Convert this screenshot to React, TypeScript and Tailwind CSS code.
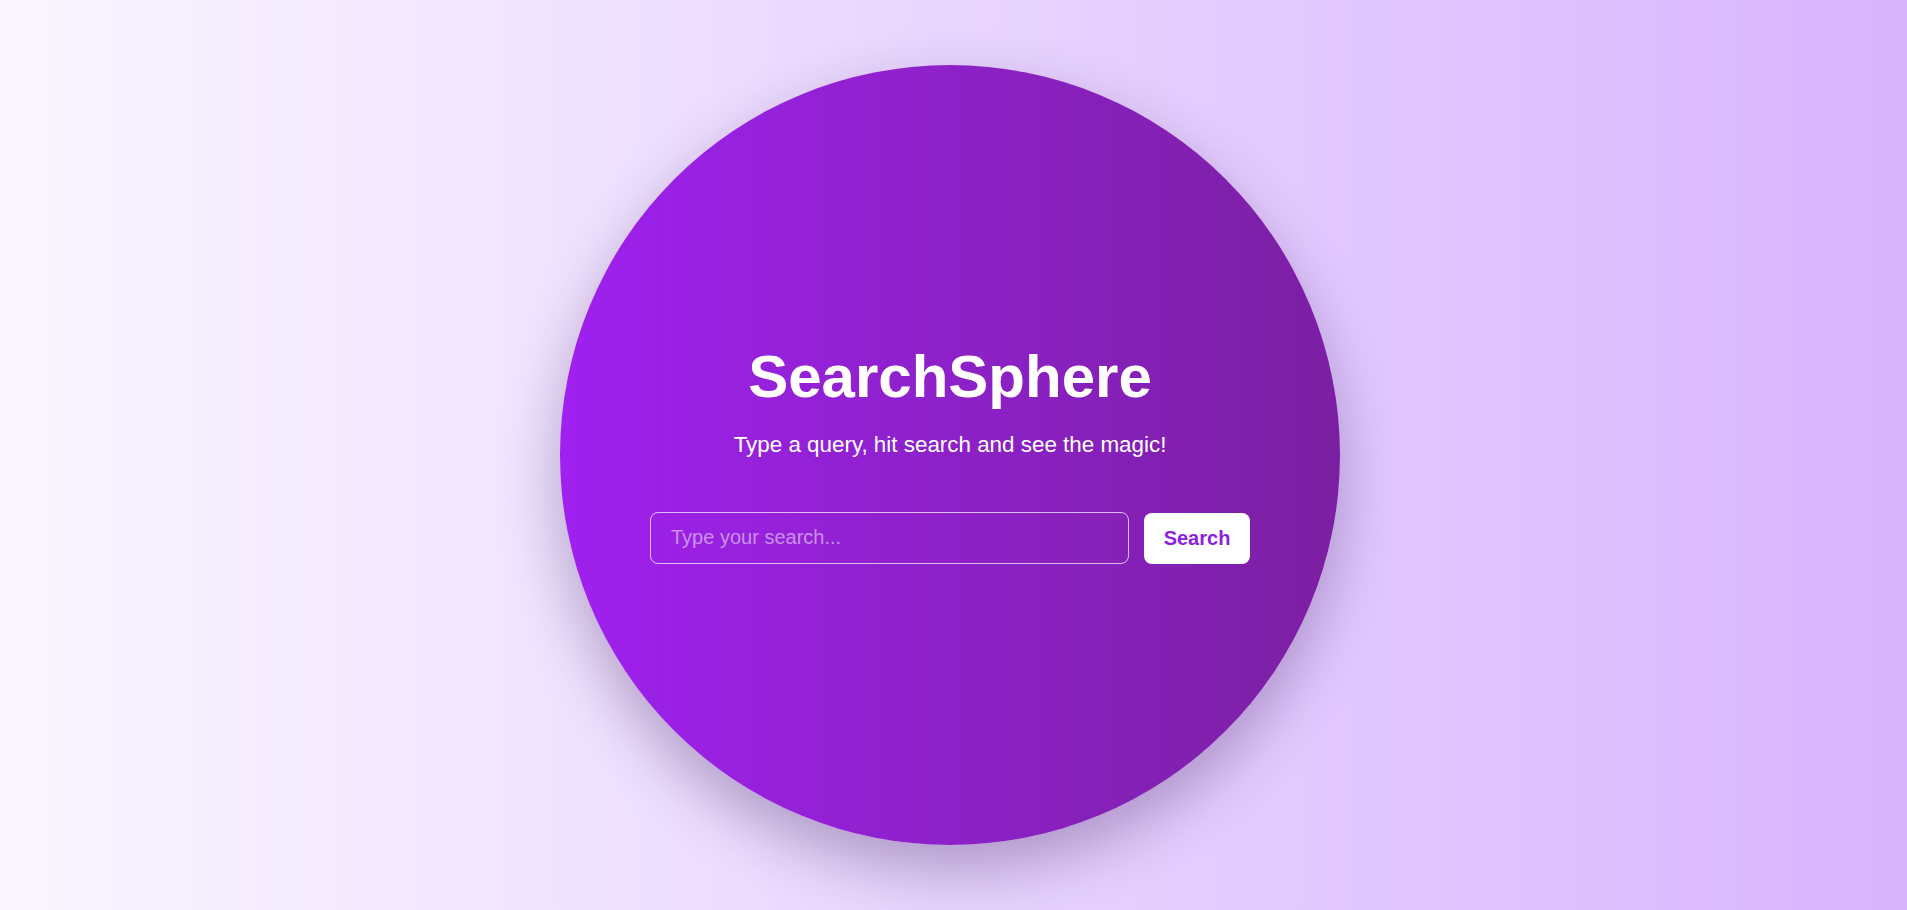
import React, {useState} from "react";

export default function App() {
    const [query, setQuery] = useState("");

    return (
        <div className="h-screen w-full overflow-hidden flex items-center justify-center bg-gradient-to-r from-[#faf6ff] to-[#d8b4fe] font-['Liberation_Sans',Arial,sans-serif]">
            {/* Sphere */}
            <div className="mr-[7px] w-[780px] h-[780px] shrink-0 rounded-full bg-gradient-to-r from-[#a020f0] to-[#7b1fa2] shadow-[0_25px_60px_rgba(40,10,70,0.3)] flex flex-col items-center justify-center pb-[6px] text-white">
                <h1 className="text-[60px] leading-[72px] font-bold">SearchSphere</h1>
                <p className="mt-[19px] text-[22.4px] leading-[26px]">Type a query, hit search and see the magic!</p>

                {/* Search form */}
                <form
                    className="mt-[54px] w-[600px] flex gap-[15px]"
                    onSubmit={e => e.preventDefault()}
                >
                    <input
                        type="text"
                        value={query}
                        onChange={e => setQuery(e.target.value)}
                        placeholder="Type your search..."
                        className="flex-1 h-[52px] px-5 rounded-lg border border-white/70 bg-transparent text-xl text-white placeholder-white/50 outline-none"
                    />
                    <button
                        type="submit"
                        className="w-[106px] h-[51px] mt-px rounded-lg bg-white text-[#8e1ee0] text-xl font-bold"
                    >
                        Search
                    </button>
                </form>
            </div>
        </div>
    );
}
